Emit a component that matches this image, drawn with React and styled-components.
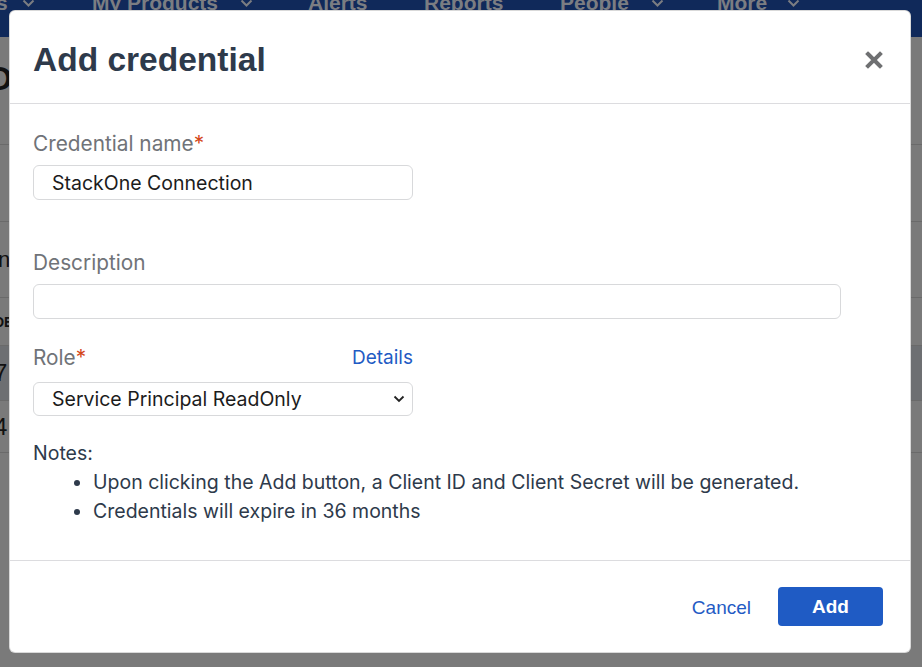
import React from 'react';
import styled, { createGlobalStyle } from 'styled-components';

const GlobalStyle = createGlobalStyle`
  html, body {
    margin: 0;
    padding: 0;
    background: #7a7a7a;
  }
  body {
    font-family: Inter, "Noto Sans", sans-serif;
    overflow: hidden;
  }
`;

const Page = styled.div`
  position: relative;
  width: 922px;
  height: 667px;
  overflow: hidden;
  background: #7a7a7a;
`;

const TopNav = styled.div`
  height: 37px;
  background: #10295a;
  display: flex;
  align-items: flex-start;
  overflow: hidden;
  margin-left: -4px;
`;

const NavItem = styled.div`
  flex: 0 0 ${p => p.$w}px;
  display: flex;
  align-items: center;
  gap: ${p => p.$chevGap}px;
  margin-top: -9px;
  font-family: "Liberation Sans", Arial, sans-serif;
  font-weight: 700;
  font-size: 21px;
  color: #7b7d82;
  white-space: nowrap;
`;

const Chevron = () => (
  <svg width="13" height="9" viewBox="0 0 13 9">
    <path d="M1.5 1.5 L6.5 6.5 L11.5 1.5" fill="none" stroke="#7b7d82" strokeWidth="2" />
  </svg>
);

const Backdrop = styled.div`
  display: flex;
  flex-direction: column;
`;

const BgTitle = styled.div`
  height: 108px;
  border-bottom: 1px solid #6a6a6a;
  display: flex;
  align-items: flex-start;
  padding-top: 22px;
  box-sizing: border-box;
  font-family: "Liberation Sans", Arial, sans-serif;
  font-weight: 700;
  font-size: 34px;
  color: #111;
  margin-left: -12px;
`;

const BgRow = styled.div`
  height: ${p => p.$h}px;
  box-sizing: border-box;
  border-bottom: 1px solid #6a6a6a;
  background: ${p => (p.$dark ? '#6d6f72' : 'transparent')};
  display: flex;
  align-items: center;
  font-family: "Liberation Sans", Arial, sans-serif;
  font-size: ${p => p.$size || 18}px;
  font-weight: ${p => (p.$bold ? 700 : 400)};
  color: #111;
  margin-left: ${p => p.$shift || 0}px;
`;

const Modal = styled.div`
  position: absolute;
  left: 10px;
  top: 11px;
  width: 900px;
  height: 641px;
  background: #fff;
  border-radius: 5px;
  box-shadow: 0 0 0 1px #d9d9d9;
  display: flex;
  flex-direction: column;
`;

const Header = styled.div`
  height: 93px;
  box-sizing: border-box;
  border-bottom: 1px solid #dcdcdf;
  display: flex;
  align-items: center;
  justify-content: space-between;
  padding: 5px 26px 0 23px;
`;

const Title = styled.h2`
  margin: 0;
  font-family: "Liberation Sans", Arial, sans-serif;
  font-weight: 700;
  font-size: 33.5px;
  color: #2e3a4b;
`;

const Close = styled.button`
  border: 0;
  background: none;
  padding: 0;
  width: 20px;
  height: 20px;
  display: flex;
  align-items: center;
  justify-content: center;
  cursor: pointer;
`;

const Body = styled.div`
  flex: 1;
  padding: 28px 23px 0 23px;
  display: flex;
  flex-direction: column;
`;

const Field = styled.div`
  width: ${p => p.$w}px;
  display: flex;
  flex-direction: column;
  margin-bottom: ${p => p.$mb}px;
`;

const LabelRow = styled.div`
  display: flex;
  justify-content: space-between;
  align-items: center;
  height: 24px;
  margin-bottom: ${p => p.$mb || 9}px;
`;

const Label = styled.label`
  font-size: 20.8px;
  color: #707378;
  line-height: 24px;
`;

const Req = styled.span`
  color: #d4471a;
`;

const Link = styled.a`
  color: #1f5bc4;
  font-size: 19px;
  line-height: 24px;
  text-decoration: none;
  cursor: pointer;
`;

const Input = styled.input`
  box-sizing: border-box;
  width: 100%;
  height: 35px;
  border: 1px solid #d8d9db;
  border-radius: 6px;
  padding: 0 18px;
  font-family: Inter, sans-serif;
  font-size: 19.5px;
  color: #1c1c1c;
  outline: none;
`;

const SelectBox = styled.div`
  box-sizing: border-box;
  height: 34px;
  border: 1px solid #d8d9db;
  border-radius: 6px;
  padding: 0 7px 0 18px;
  display: flex;
  align-items: center;
  justify-content: space-between;
  font-size: 19.5px;
  color: #1c1c1c;
`;

const Notes = styled.div`
  color: #2e3a4b;
  font-size: 19.5px;
  line-height: 29px;
`;

const NoteList = styled.ul`
  margin: 0;
  padding-left: 60px;
`;

const Footer = styled.div`
  height: 92px;
  box-sizing: border-box;
  border-top: 1px solid #dcdcdf;
  display: flex;
  align-items: center;
  justify-content: flex-end;
  gap: 27px;
  padding: 0 27px 0 0;
`;

const CancelButton = styled.button`
  border: 0;
  background: none;
  color: #1f5bc4;
  font-family: "Liberation Sans", Arial, sans-serif;
  font-size: 19px;
  padding: 0;
  margin-top: 3px;
  cursor: pointer;
`;

const PrimaryButton = styled.button`
  width: 105px;
  height: 39px;
  border: 0;
  border-radius: 4px;
  background: #1f5bc4;
  color: #fff;
  font-family: "Liberation Sans", Arial, sans-serif;
  font-weight: 700;
  font-size: 19px;
  cursor: pointer;
`;

const navItems = [
  { label: 's', chevron: true, w: 96, chevGap: 14 },
  { label: 'My Products', chevron: true, w: 216, chevGap: 22 },
  { label: 'Alerts', chevron: false, w: 116, chevGap: 0 },
  { label: 'Reports', chevron: false, w: 136, chevGap: 0 },
  { label: 'People', chevron: true, w: 157, chevGap: 22 },
  { label: 'More', chevron: true, w: 180, chevGap: 20 },
];

export default function App() {
  return (
    <Page>
      <GlobalStyle />
      <TopNav>
        {navItems.map(item => (
          <NavItem key={item.label} $w={item.w} $chevGap={item.chevGap}>
            {item.label}
            {item.chevron && <Chevron />}
          </NavItem>
        ))}
      </TopNav>
      <Backdrop>
        <BgTitle>Da</BgTitle>
        <BgRow $h={77} />
        <BgRow $h={76} $shift={-8} $size={22}>In</BgRow>
        <BgRow $h={48} $bold $size={14} $shift={-6}>DE</BgRow>
        <BgRow $h={55} $dark $size={24} $shift={-6}>7</BgRow>
        <BgRow $h={52} $size={24} $shift={-6}>4</BgRow>
      </Backdrop>

      <Modal>
        <Header>
          <Title>Add credential</Title>
          <Close aria-label="Close">
            <svg width="18" height="18" viewBox="0 0 18 18">
              <path d="M3 3 L15 15 M15 3 L3 15" stroke="#6f7072" strokeWidth="4" strokeLinecap="square" />
            </svg>
          </Close>
        </Header>
        <Body>
          <Field $w={380} $mb={51}>
            <LabelRow>
              <Label>Credential name<Req>*</Req></Label>
            </LabelRow>
            <Input defaultValue="StackOne Connection" />
          </Field>
          <Field $w={808} $mb={27}>
            <LabelRow>
              <Label>Description</Label>
            </LabelRow>
            <Input defaultValue="" />
          </Field>
          <Field $w={380} $mb={23}>
            <LabelRow $mb={12}>
              <Label>Role<Req>*</Req></Label>
              <Link>Details</Link>
            </LabelRow>
            <SelectBox>
              Service Principal ReadOnly
              <svg width="12" height="8" viewBox="0 0 12 8">
                <path d="M1.5 1.5 L6 6 L10.5 1.5" fill="none" stroke="#222" strokeWidth="1.8" />
              </svg>
            </SelectBox>
          </Field>
          <Notes>
            Notes:
            <NoteList>
              <li>Upon clicking the Add button, a Client ID and Client Secret will be generated.</li>
              <li>Credentials will expire in 36 months</li>
            </NoteList>
          </Notes>
        </Body>
        <Footer>
          <CancelButton>Cancel</CancelButton>
          <PrimaryButton>Add</PrimaryButton>
        </Footer>
      </Modal>
    </Page>
  );
}
